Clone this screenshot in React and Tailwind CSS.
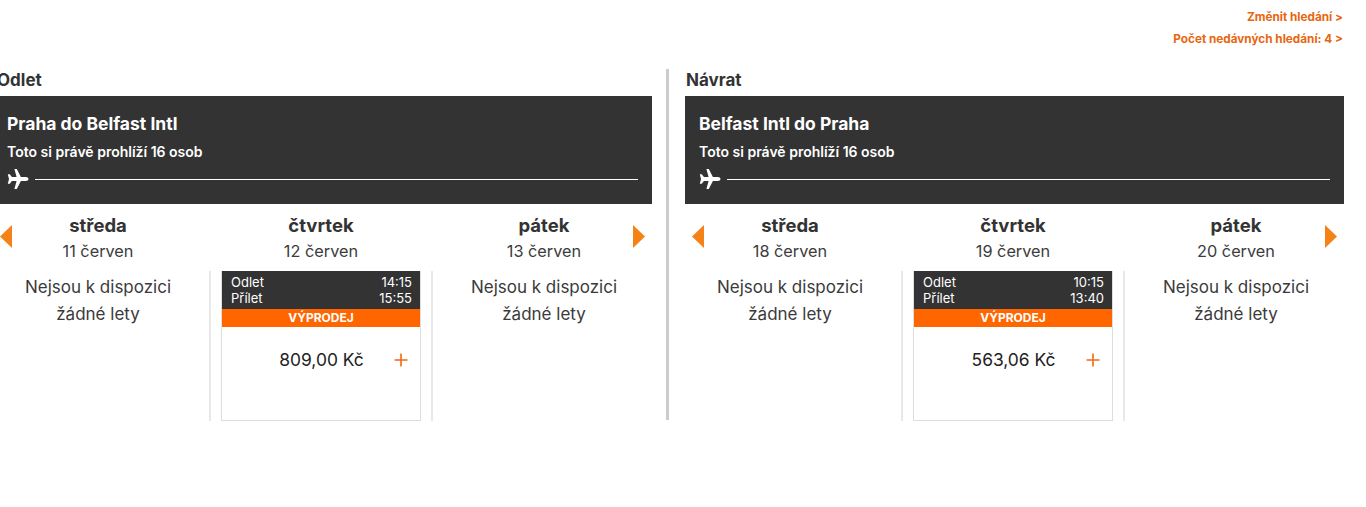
const F = "[font-family:Inter,'Noto_Sans',sans-serif]";

function Plane() {
  return (
    <svg width="22" height="22" viewBox="0 0 22 22" className="shrink-0">
      <path fill="#fff" d="M21.5 11c0-1.1-1.2-2-2.6-2h-5L9.8 1H7.4l2.2 8H4.9L2.8 6.2H.8L2 11 .8 15.8h2L4.9 13h4.7l-2.2 8h2.4l4.1-8h5C20.3 13 21.5 12.1 21.5 11z" />
    </svg>
  );
}

function Arrow({ dir, cls }) {
  return (
    <svg width="12" height="23" viewBox="0 0 12 23" className={"absolute top-[225px] " + cls}>
      <path fill="#f58216" d={dir === "left" ? "M12 0V23L0 11.5Z" : "M0 0V23L12 11.5Z"} />
    </svg>
  );
}

function DayHead({ day, date }) {
  return (
    <div className="h-[67px] w-full flex flex-col items-center text-[#333]">
      <div className="mt-[9px] text-[18.5px] leading-[24px] font-bold">{day}</div>
      <div className="mt-[4px] text-[16.3px] leading-[20px] text-[#3c3c3c]">{date}</div>
    </div>
  );
}

function Empty({ day, date }) {
  return (
    <div className="w-[222px] shrink-0 flex flex-col items-center">
      <DayHead day={day} date={date} />
      <div className="mt-[3px] text-center text-[17px] leading-[27px] text-[#3a3a3a]">
        <div>Nejsou k dispozici</div>
        <div>žádné lety</div>
      </div>
    </div>
  );
}

function Card({ day, date, dep, arr, price }) {
  return (
    <div className="w-[224px] shrink-0 flex flex-col items-center">
      <DayHead day={day} date={date} />
      <div className="w-[224px] h-[150px] border-x-2 border-[#e8e8e8] pl-[10px] flex">
        <div className="w-[200px] h-[150px] border border-t-0 border-[#dedede] flex flex-col">
          <div className="bg-[#333] h-[38px] pl-[9px] pr-[8px] pt-[3px] text-white text-[13px] leading-[16px]">
            <div className="flex justify-between"><span>Odlet</span><span>{dep}</span></div>
            <div className="flex justify-between"><span>Přílet</span><span>{arr}</span></div>
          </div>
          <div className="bg-[#ff6600] h-[18px] text-white text-[12px] leading-[18px] font-bold text-center">VÝPRODEJ</div>
          <div className="flex items-center mt-[21px]">
            <span className="w-[199px] shrink-0 text-center text-[17.4px] leading-[24px] text-[#222]">{price}</span>
            <svg width="14" height="14" viewBox="0 0 14 14" className="ml-[-27px] shrink-0"><path d="M7 0.5V13.5M0.5 7H13.5" stroke="#ef6a12" strokeWidth="1.6" /></svg>
          </div>
        </div>
      </div>
    </div>
  );
}

function Panel({ heading, route, days, card, headCls }) {
  return (
    <section className="w-[659px] shrink-0">
      <h2 className={"h-[27px] leading-[22px] text-[17px] font-bold text-[#333] " + headCls}>{heading}</h2>
      <div className="bg-[#333] h-[108px] px-[14px] pt-[17px] text-white">
        <div className="text-[17.5px] leading-[22px] font-bold">{route}</div>
        <div className="mt-[8px] text-[14px] leading-[18px] font-semibold">Toto si právě prohlíží 16 osob</div>
        <div className="mt-[7px] flex items-center gap-[6px]">
          <Plane />
          <div className="h-px flex-1 bg-white" />
        </div>
      </div>
      <div className="flex ml-[-6px]">
        <Empty day={days[0][0]} date={days[0][1]} />
        <Card day={days[1][0]} date={days[1][1]} {...card} />
        <Empty day={days[2][0]} date={days[2][1]} />
      </div>
    </section>
  );
}

export default function App() {
  return (
    <div className={"relative w-[1366px] h-[507px] overflow-hidden bg-white " + F}>
      <div className="flex flex-col items-end pr-[23px] pt-[6px] text-[11.75px] leading-[22px] font-bold text-[#e8660f]">
        <div>Změnit hledání &gt;</div>
        <div>Počet nedávných hledání: 4 &gt;</div>
      </div>
      <div className="flex ml-[-7px] mt-[19px]">
        <Panel
          heading="Odlet"
          headCls="pl-[4px]"
          route="Praha do Belfast Intl"
          days={[["středa", "11 červen"], ["čtvrtek", "12 červen"], ["pátek", "13 červen"]]}
          card={{ dep: "14:15", arr: "15:55", price: "809,00 Kč" }}
        />
        <div className="w-[3px] h-[351px] bg-[#cccccc] ml-[14px] mr-[16px] shrink-0" />
        <Panel
          heading="Návrat"
          headCls="pl-[1px]"
          route="Belfast Intl do Praha"
          days={[["středa", "18 červen"], ["čtvrtek", "19 červen"], ["pátek", "20 červen"]]}
          card={{ dep: "10:15", arr: "13:40", price: "563,06 Kč" }}
        />
      </div>
      <Arrow dir="left" cls="left-0" />
      <Arrow dir="right" cls="left-[633px]" />
      <Arrow dir="left" cls="left-[692px]" />
      <Arrow dir="right" cls="left-[1325px]" />
    </div>
  );
}
